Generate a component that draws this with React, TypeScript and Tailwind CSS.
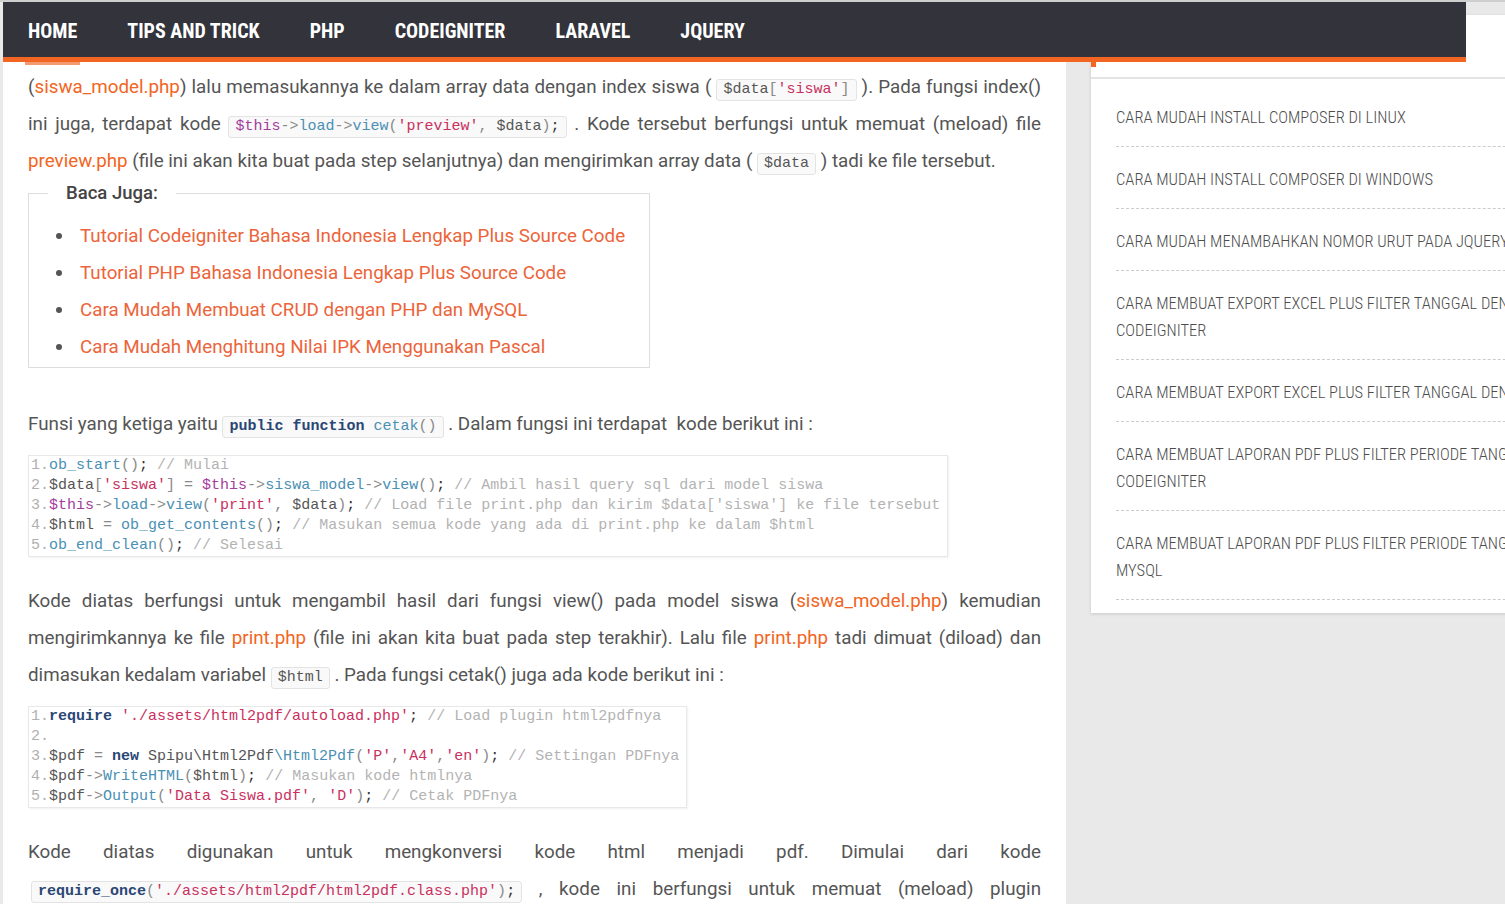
import React from 'react'

type Tok = [string, keyof typeof tone | '']

const tone = {
  n: 'text-[#b0b0b0]',
  v: 'text-[#555555]',
  p: 'text-[#8a8a8a]',
  e: 'text-[#333333]',
  f: 'text-[#4a90b4]',
  s: 'text-[#c9305e]',
  t: 'text-[#a43c9e]',
  k: 'font-bold text-[#2a4675]',
  c: 'text-[#b3b3b3]',
}

const mono = "font-['Liberation_Mono','Courier_New',monospace]"

function Toks({ toks }: { toks: Tok[] }) {
  return (
    <>
      {toks.map(([text, k], i) => (
        <span key={i} className={k ? tone[k] : ''}>
          {text}
        </span>
      ))}
    </>
  )
}

function Code({ toks, className = '' }: { toks: Tok[]; className?: string }) {
  return (
    <code
      className={`${mono} inline-block text-[15px] leading-[18px] py-[1px] px-[6px] bg-[#f9f9f9] border border-[#e3e3e3] rounded-[3px] whitespace-pre ${className}`}
    >
      <Toks toks={toks} />
    </code>
  )
}

function Block({ lines }: { lines: Tok[][] }) {
  return (
    <pre
      className={`${mono} w-fit text-[15px] leading-[20px] pl-[2px] pr-[7px] bg-white border border-[#e8e8e8] shadow-[1px_1px_2px_rgba(0,0,0,0.06)] mb-[26px]`}
    >
      {lines.map((l, i) => (
        <div key={i}>
          <Toks toks={l} />
        </div>
      ))}
    </pre>
  )
}

const O = ({ children }: { children: React.ReactNode }) => <span className="text-[#f26522]">{children}</span>

// one justified line of prose
const J = ({ children }: { children: React.ReactNode }) => (
  <div className="text-justify [text-align-last:justify]">{children}</div>
)
const L = ({ children }: { children: React.ReactNode }) => <div>{children}</div>

const block1: Tok[][] = [
  [['1.', 'n'], ['ob_start', 'f'], ['()', 'p'], [';', 'e'], [' ', ''], ['// Mulai', 'c']],
  [
    ['2.', 'n'], ['$data', 'v'], ['[', 'p'], ["'siswa'", 's'], [']', 'p'], [' = ', 'p'], ['$this', 't'], ['->', 'p'],
    ['siswa_model', 'f'], ['->', 'p'], ['view', 'f'], ['()', 'p'], [';', 'e'], [' ', ''],
    ['// Ambil hasil query sql dari model siswa', 'c'],
  ],
  [
    ['3.', 'n'], ['$this', 't'], ['->', 'p'], ['load', 'f'], ['->', 'p'], ['view', 'f'], ['(', 'p'], ["'print'", 's'],
    [', ', 'p'], ['$data', 'v'], [')', 'p'], [';', 'e'], [' ', ''],
    ["// Load file print.php dan kirim $data['siswa'] ke file tersebut", 'c'],
  ],
  [
    ['4.', 'n'], ['$html', 'v'], [' = ', 'p'], ['ob_get_contents', 'f'], ['()', 'p'], [';', 'e'], [' ', ''],
    ['// Masukan semua kode yang ada di print.php ke dalam $html', 'c'],
  ],
  [['5.', 'n'], ['ob_end_clean', 'f'], ['()', 'p'], [';', 'e'], [' ', ''], ['// Selesai', 'c']],
]

const block2: Tok[][] = [
  [['1.', 'n'], ['require', 'k'], [' ', ''], ["'./assets/html2pdf/autoload.php'", 's'], [';', 'e'], [' ', ''], ['// Load plugin html2pdfnya', 'c']],
  [['2.', 'n']],
  [
    ['3.', 'n'], ['$pdf', 'v'], [' = ', 'p'], ['new', 'k'], [' ', ''], ['Spipu\\Html2Pdf', 'v'], ['\\Html2Pdf', 'f'], ['(', 'p'],
    ["'P'", 's'], [',', 'p'], ["'A4'", 's'], [',', 'p'], ["'en'", 's'], [')', 'p'], [';', 'e'], [' ', ''],
    ['// Settingan PDFnya', 'c'],
  ],
  [['4.', 'n'], ['$pdf', 'v'], ['->', 'p'], ['WriteHTML', 'f'], ['(', 'p'], ['$html', 'v'], [')', 'p'], [';', 'e'], [' ', ''], ['// Masukan kode htmlnya', 'c']],
  [
    ['5.', 'n'], ['$pdf', 'v'], ['->', 'p'], ['Output', 'f'], ['(', 'p'], ["'Data Siswa.pdf'", 's'], [', ', 'p'], ["'D'", 's'],
    [')', 'p'], [';', 'e'], [' ', ''], ['// Cetak PDFnya', 'c'],
  ],
]

const navItems = ['Home', 'Tips and Trick', 'PHP', 'Codeigniter', 'Laravel', 'jQuery']

const related = [
  'Tutorial Codeigniter Bahasa Indonesia Lengkap Plus Source Code',
  'Tutorial PHP Bahasa Indonesia Lengkap Plus Source Code',
  'Cara Mudah Membuat CRUD dengan PHP dan MySQL',
  'Cara Mudah Menghitung Nilai IPK Menggunakan Pascal',
]

const recent: string[][] = [
  ['CARA MUDAH INSTALL COMPOSER DI LINUX'],
  ['CARA MUDAH INSTALL COMPOSER DI WINDOWS'],
  ['CARA MUDAH MENAMBAHKAN NOMOR URUT PADA JQUERY'],
  ['CARA MEMBUAT EXPORT EXCEL PLUS FILTER TANGGAL DEN', 'CODEIGNITER'],
  ['CARA MEMBUAT EXPORT EXCEL PLUS FILTER TANGGAL DEN'],
  ['CARA MEMBUAT LAPORAN PDF PLUS FILTER PERIODE TANG', 'CODEIGNITER'],
  ['CARA MEMBUAT LAPORAN PDF PLUS FILTER PERIODE TANG', 'MYSQL'],
]

export default function App() {
  return (
    <div className="relative w-[1505px] h-[904px] overflow-hidden bg-[#e9e9e9] border-t-2 border-[#cfcfcf] flex items-start font-['Roboto',sans-serif]">
      {/* Header */}
      <nav className="absolute top-0 left-[3px] w-[1463px] h-[60px] pt-[2px] bg-[#33333b] border-b-[5px] border-[#f26522] flex items-center z-10">
        {navItems.map((item, i) => (
          <a
            key={item}
            href="#"
            className="relative px-[25px] h-full flex items-center text-white uppercase font-bold text-[20px] [font-stretch:85%]"
          >
            {item}
            {i === 0 && <span className="absolute left-[22px] right-[22px] -bottom-[8px] h-[3px] bg-[#f49a72]" />}
          </a>
        ))}
      </nav>

      {/* Article */}
      <main className="ml-[3px] w-[1063px] h-full shrink-0 bg-white px-[25px] pt-[67px] text-[18.8px] leading-[37px] text-[#555]">
        <div>
          <J>
            (<O>siswa_model.php</O>) lalu memasukannya ke dalam array data dengan index siswa ({' '}
            <Code toks={[['$data', 'v'], ['[', 'p'], ["'siswa'", 's'], [']', 'p']]} /> ). Pada fungsi index()
          </J>
          <J>
            ini juga, terdapat kode{' '}
            <Code
              toks={[
                ['$this', 't'], ['->', 'p'], ['load', 'f'], ['->', 'p'], ['view', 'f'], ['(', 'p'], ["'preview'", 's'],
                [', ', 'p'], ['$data', 'v'], [')', 'p'], [';', 'e'],
              ]}
            />{' '}
            . Kode tersebut berfungsi untuk memuat (meload) file
          </J>
          <L>
            <O>preview.php</O> (file ini akan kita buat pada step selanjutnya) dan mengirimkan array data ({' '}
            <Code toks={[['$data', 'v']]} /> ) tadi ke file tersebut.
          </L>
        </div>

        <fieldset className="w-[622px] border border-[#dddddd] mb-[38.5px]">
          <legend className="ml-[19px] px-[18px] text-[18.5px] leading-[26px] font-medium text-[#444]">Baca Juga:</legend>
          <ul className="mt-[11.5px] pb-[1px]">
            {related.map((r) => (
              <li key={r} className="flex items-center">
                <span className="ml-[27px] mr-[18px] w-[6px] h-[6px] rounded-full bg-[#555]" />
                <a href="#" className="text-[#ec643a]">
                  {r}
                </a>
              </li>
            ))}
          </ul>
        </fieldset>

        <p className="mb-[11.5px]">
          Funsi yang ketiga yaitu <Code toks={[['public function', 'k'], [' ', ''], ['cetak', 'f'], ['()', 'p']]} /> . Dalam
          fungsi ini terdapat&nbsp; kode berikut ini :
        </p>

        <Block lines={block1} />

        <div className="mb-[12px]">
          <J>
            Kode diatas berfungsi untuk mengambil hasil dari fungsi view() pada model siswa (<O>siswa_model.php</O>) kemudian
          </J>
          <J>
            mengirimkannya ke file <O>print.php</O> (file ini akan kita buat pada step terakhir). Lalu file <O>print.php</O> tadi
            dimuat (diload) dan
          </J>
          <L>
            dimasukan kedalam variabel <Code toks={[['$html', 'v']]} /> . Pada fungsi cetak() juga ada kode berikut ini :
          </L>
        </div>

        <Block lines={block2} />

        <div>
          <J>Kode diatas digunakan untuk mengkonversi kode html menjadi pdf. Dimulai dari kode</J>
          <J>
            <Code
              className="ml-[3px]"
              toks={[['require_once', 'k'], ['(', 'p'], ["'./assets/html2pdf/html2pdf.class.php'", 's'], [')', 'p'], [';', 'e']]}
            />{' '}
            , kode ini berfungsi untuk memuat (meload) plugin
          </J>
        </div>
      </main>

      {/* Sidebar */}
      <aside className="ml-[25px] mt-[13px] w-[470px] shrink-0 bg-white shadow-[0_1px_3px_rgba(0,0,0,0.15)]">
        <div className="h-[52px] border-l-[5px] border-[#f26522]" />
        <div className="h-[10px]" />
        <ul className="border-t-2 border-[#e4e4e4] pl-[25px] pt-[6px] pb-[13px] text-[16.5px] [font-stretch:78%] [font-weight:350] leading-[27px] text-[#4d4d4d] uppercase">
          {recent.map((lines, i) => (
            <li key={i} className="pt-[18.5px] pb-[15.5px] border-b border-dashed border-[#cccccc]">
              {lines.map((t, j) => (
                <a key={j} href="#" className="block whitespace-nowrap">
                  {t}
                </a>
              ))}
            </li>
          ))}
        </ul>
      </aside>
    </div>
  )
}
